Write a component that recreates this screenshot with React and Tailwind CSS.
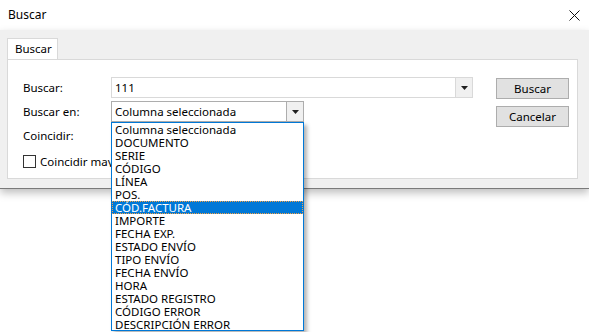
import React from 'react';

const items = [
    'Columna seleccionada',
    'DOCUMENTO',
    'SERIE',
    'CÓDIGO',
    'LÍNEA',
    'POS.',
    'CÓD.FACTURA',
    'IMPORTE',
    'FECHA EXP.',
    'ESTADO ENVÍO',
    'TIPO ENVÍO',
    'FECHA ENVÍO',
    'HORA',
    'ESTADO REGISTRO',
    'CÓDIGO ERROR',
    'DESCRIPCIÓN ERROR',
];

const Arrow = () => (
    <svg width="7" height="4" viewBox="0 0 7 4">
        <path d="M0 0 H7 L3.5 4 Z" fill="#1f1f1f" />
    </svg>
);

const App = () => {
    return (
        <div className="relative w-[589px] h-[332px] bg-white overflow-hidden text-[11.5px] text-black font-['Noto_Sans',sans-serif] leading-none">
            {/* Title bar */}
            <div className="h-[30px] flex items-center justify-between pl-[8px] pr-[8px]">
                <span className="text-[12px]">Buscar</span>
                <svg width="11" height="11" viewBox="0 0 11 11" className="mr-[1px]">
                    <path d="M0.5 0.5 L10.5 10.5 M10.5 0.5 L0.5 10.5" stroke="#111" strokeWidth="1" />
                </svg>
            </div>

            {/* Body */}
            <div className="h-[159px] bg-[#f0f0f0] border-b border-[#7a7a7a] shadow-[0_4px_8px_rgba(0,0,0,0.25)] pt-[8px] px-[7px]">
                <div className="flex">
                    <div className="h-[21px] w-[51px] bg-white border border-b-0 border-[#d9d9d9] flex items-center pl-[7px]">
                        Buscar
                    </div>
                </div>
                <div className="h-[120px] w-[571px] bg-white border border-[#d9d9d9] flex pt-[17px] pl-[15px]">
                    <div className="flex flex-col w-[465px]">
                        <div className="flex items-center h-[21px]">
                            <span className="w-[88px]">Buscar:</span>
                            <div className="flex h-[21px] w-[362px] border border-[#d9d9d9] bg-white">
                                <div className="flex-1 flex items-center pl-[3px]">111</div>
                                <div className="w-[17px] border-l border-[#d9d9d9] bg-[#f0f0f0] flex items-center justify-center">
                                    <Arrow />
                                </div>
                            </div>
                        </div>
                        <div className="flex items-center h-[21px] mt-[3px]">
                            <span className="w-[88px]">Buscar en:</span>
                            <div className="flex h-[21px] w-[193px] border border-[#adadad] bg-white">
                                <div className="flex-1 flex items-center pl-[3px]">Columna seleccionada</div>
                                <div className="w-[17px] border-l border-[#adadad] bg-[#f0f0f0] flex items-center justify-center">
                                    <Arrow />
                                </div>
                            </div>
                        </div>
                        <div className="flex items-center h-[21px] mt-[3px]">
                            <span className="w-[88px]">Coincidir:</span>
                        </div>
                        <div className="flex items-center h-[13px] mt-[9px]">
                            <div className="w-[13px] h-[13px] border border-[#333] bg-white" />
                            <span className="ml-[4px] w-[71px] overflow-hidden whitespace-nowrap">Coincidir mayúsculas</span>
                        </div>
                    </div>
                    <div className="flex flex-col ml-[8px]">
                        <button className="w-[73px] h-[21px] border border-[#adadad] bg-[#e1e1e1] mt-[1px]">Buscar</button>
                        <button className="w-[73px] h-[21px] border border-[#adadad] bg-[#e1e1e1] mt-[7px]">Cancelar</button>
                    </div>
                </div>
            </div>

            {/* Open dropdown list */}
            <div className="absolute left-[111px] top-[122px] w-[193px] h-[209px] bg-white border border-[#0078d7] shadow-[3px_3px_4px_rgba(0,0,0,0.3)]">
                {items.map((item) => (
                    <div
                        key={item}
                        className={
                            item === 'CÓD.FACTURA'
                                ? 'h-[13px] flex items-center pl-[3px] bg-[#0078d7] text-white outline-1 outline-dotted outline-[#f5a142] -outline-offset-1'
                                : 'h-[13px] flex items-center pl-[3px]'
                        }
                    >
                        {item}
                    </div>
                ))}
            </div>
        </div>
    );
};

export default App;
